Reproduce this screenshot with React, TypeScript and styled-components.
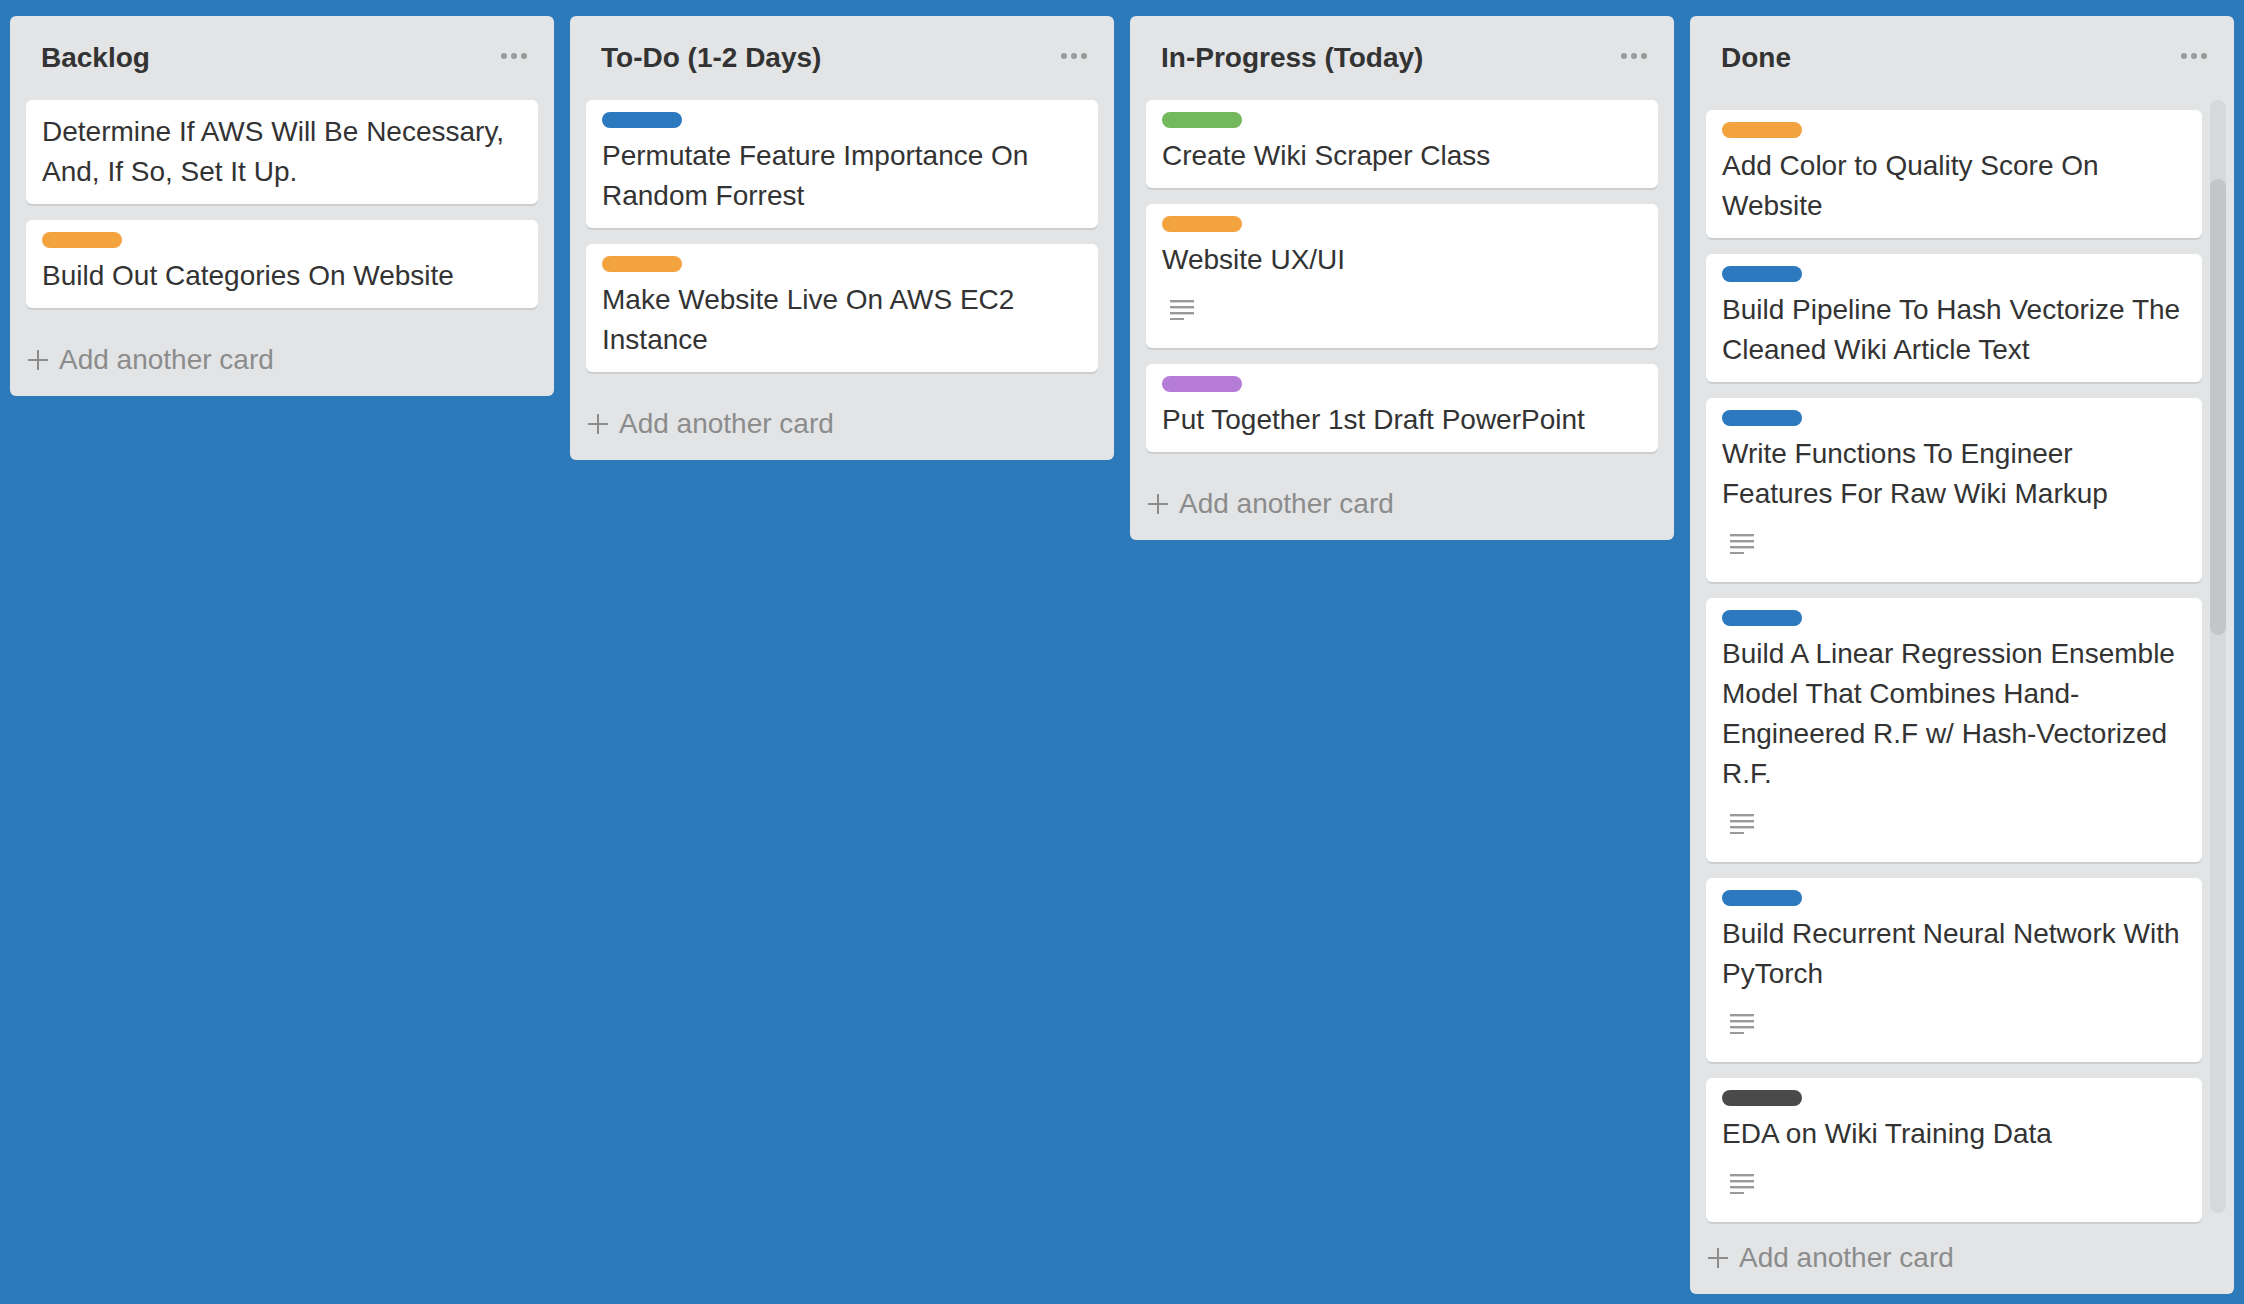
import React from "react"
import styled, { createGlobalStyle } from "styled-components"

type LabelColor = "green" | "orange" | "purple" | "blue" | "black"

type CardData = {
  text: string
  label?: LabelColor
  description?: boolean
}

type ListData = {
  title: string
  scroll?: boolean
  cards: CardData[]
}

const labelColors: Record<LabelColor, string> = {
  green: "#73b85c",
  orange: "#f2a33f",
  purple: "#b77bd8",
  blue: "#2d79bf",
  black: "#4a4a4a",
}

const lists: ListData[] = [
  {
    title: "Backlog",
    cards: [
      { text: "Determine If AWS Will Be Necessary, And, If So, Set It Up." },
      { label: "orange", text: "Build Out Categories On Website" },
    ],
  },
  {
    title: "To-Do (1-2 Days)",
    cards: [
      { label: "blue", text: "Permutate Feature Importance On Random Forrest" },
      { label: "orange", text: "Make Website Live On AWS EC2 Instance" },
    ],
  },
  {
    title: "In-Progress (Today)",
    cards: [
      { label: "green", text: "Create Wiki Scraper Class" },
      { label: "orange", text: "Website UX/UI", description: true },
      { label: "purple", text: "Put Together 1st Draft PowerPoint" },
    ],
  },
  {
    title: "Done",
    scroll: true,
    cards: [
      { label: "orange", text: "Add Color to Quality Score On Website" },
      {
        label: "blue",
        text: "Build Pipeline To Hash Vectorize The Cleaned Wiki Article Text",
      },
      {
        label: "blue",
        text: "Write Functions To Engineer Features For Raw Wiki Markup",
        description: true,
      },
      {
        label: "blue",
        text:
          "Build A Linear Regression Ensemble Model That Combines Hand-Engineered R.F w/ Hash-Vectorized R.F.",
        description: true,
      },
      {
        label: "blue",
        text: "Build Recurrent Neural Network With PyTorch",
        description: true,
      },
      { label: "black", text: "EDA on Wiki Training Data", description: true },
    ],
  },
]

const GlobalStyle = createGlobalStyle`
  html, body {
    margin: 0;
    padding: 0;
    background: #2d7aba;
    height: 1304px;
    overflow: hidden;
  }
  body {
    font-family: "Liberation Sans", Arial, Helvetica, sans-serif;
    color: #333;
  }
  * {
    box-sizing: border-box;
  }
`

const DescriptionIcon = () => (
  <svg width="24" height="20" viewBox="0 0 24 20" fill="#999">
    <rect x="0" y="0" width="24" height="2.4" />
    <rect x="0" y="6" width="24" height="2.4" />
    <rect x="0" y="12" width="24" height="2.4" />
    <rect x="0" y="18" width="14" height="2.4" />
  </svg>
)

const PlusIcon = () => (
  <svg width="20" height="20" viewBox="0 0 20 20" stroke="#8c8c8c" strokeWidth="2">
    <line x1="10" y1="0" x2="10" y2="20" />
    <line x1="0" y1="10" x2="20" y2="10" />
  </svg>
)

const Card: React.FC<{ card: CardData }> = ({ card }) => (
  <CardBox>
    {card.label && <Label color={labelColors[card.label]} />}
    <CardTitle>{card.text}</CardTitle>
    {card.description && (
      <Badges>
        <DescriptionIcon />
      </Badges>
    )}
  </CardBox>
)

const List: React.FC<{ list: ListData }> = ({ list }) => {
  const cards = (
    <CardStack scroll={list.scroll}>
      {list.cards.map((card) => (
        <Card key={card.text} card={card} />
      ))}
    </CardStack>
  )
  return (
    <ListBox>
      <ListHeader>
        <ListTitle>{list.title}</ListTitle>
        <MenuDots>
          <span />
          <span />
          <span />
        </MenuDots>
      </ListHeader>
      {list.scroll ? (
        <ScrollArea>
          {cards}
          <ScrollTrack>
            <ScrollThumb />
          </ScrollTrack>
        </ScrollArea>
      ) : (
        <CardsArea>{cards}</CardsArea>
      )}
      <Composer tight={list.scroll}>
        <PlusIcon />
        <span>Add another card</span>
      </Composer>
    </ListBox>
  )
}

const App = () => (
  <>
    <GlobalStyle />
    <Board>
      {lists.map((list) => (
        <List key={list.title} list={list} />
      ))}
    </Board>
  </>
)

const Board = styled.div`
  display: flex;
  align-items: flex-start;
  gap: 16px;
  padding: 16px 0 0 10px;
`

const ListBox = styled.section`
  width: 544px;
  flex-shrink: 0;
  background: #e2e4e6;
  border-radius: 6px;
  padding-bottom: 16px;
  display: flex;
  flex-direction: column;
`

const ListHeader = styled.header`
  height: 84px;
  display: flex;
  align-items: center;
  justify-content: space-between;
  padding: 0 27px 0 31px;
`

const ListTitle = styled.h2`
  margin: 0;
  font-size: 28px;
  line-height: 40px;
  font-weight: 700;
  color: #333;
`

const MenuDots = styled.div`
  display: flex;
  gap: 4px;
  margin-bottom: 4px;

  span {
    width: 6px;
    height: 6px;
    border-radius: 50%;
    background: #999;
  }
`

const CardsArea = styled.div`
  padding: 0 16px;
`

const ScrollArea = styled.div`
  display: flex;
  gap: 8px;
  padding: 0 8px 0 16px;
`

const CardStack = styled.div<{ scroll?: boolean }>`
  flex: 1;
  display: flex;
  flex-direction: column;
  gap: 16px;
  padding-top: ${(p) => (p.scroll ? "10px" : "0")};
`

const ScrollTrack = styled.div`
  width: 16px;
  flex-shrink: 0;
  margin-bottom: 9px;
  border-radius: 8px;
  background: #d6d9dc;
  display: flex;
  flex-direction: column;
`

const ScrollThumb = styled.div`
  margin-top: 79px;
  height: 456px;
  border-radius: 8px;
  background: #c3c6c9;
`

const CardBox = styled.article`
  background: #fff;
  border-radius: 6px;
  box-shadow: 0 2px 0 #cbcfd2;
  padding: 12px 16px 12px 16px;
`

const Label = styled.div<{ color: string }>`
  width: 80px;
  height: 16px;
  border-radius: 8px;
  margin-bottom: 8px;
  background: ${(p) => p.color};
`

const CardTitle = styled.div`
  font-size: 28px;
  line-height: 40px;
  color: #333;
`

const Badges = styled.div`
  display: flex;
  height: 20px;
  margin: 20px 0 16px 8px;
`

const Composer = styled.div<{ tight?: boolean }>`
  display: flex;
  align-items: center;
  gap: 11px;
  height: 40px;
  margin-top: ${(p) => (p.tight ? "16px" : "32px")};
  padding-left: 18px;
  font-size: 28px;
  color: #8c8c8c;
`

export default App
